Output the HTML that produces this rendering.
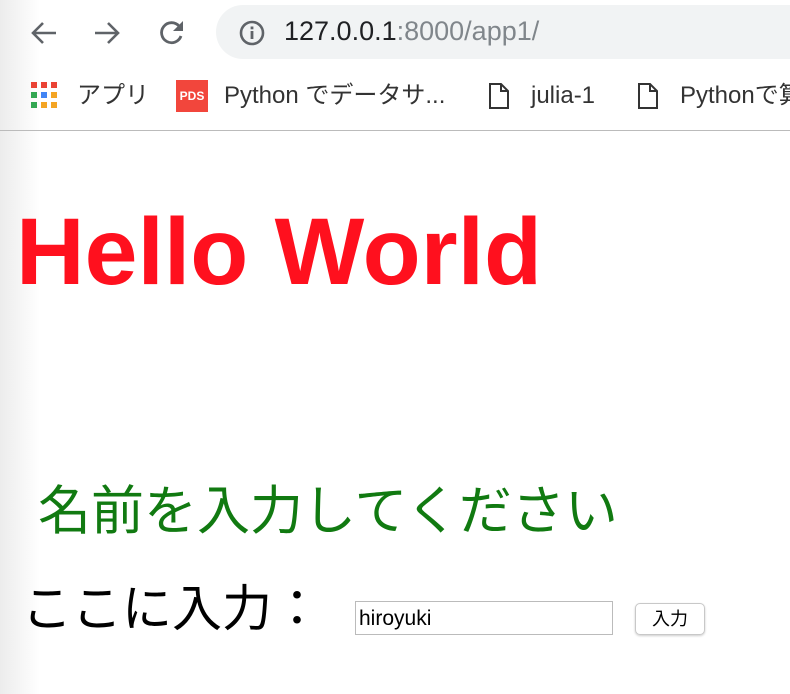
<!DOCTYPE html>
<html><head><meta charset="utf-8"><style>
body{margin:0;width:790px;height:694px;overflow:hidden;background:#fff;position:relative;font-family:"Liberation Sans","Noto Sans CJK JP",sans-serif}
.grad{position:absolute;left:0;top:0;width:40px;height:694px;background:linear-gradient(90deg,#ececec,#fff)}
.a{position:absolute}
.pill{left:216px;top:5px;width:600px;height:54px;border-radius:27px;background:#f1f3f4}
.url{left:284px;top:16px;font-size:27px;color:#202124}
.url span{color:#80868b}
.bm{top:80px;font-size:24px;line-height:32px;height:32px;color:#333;white-space:nowrap}
.dot{position:absolute;width:6px;height:6px}
</style></head><body>
<div class="grad"></div>
<svg class="a" style="left:28px;top:18px" width="36" height="30" viewBox="0 0 36 30"><path d="M28 15H5M15 5L5 15l10 10" fill="none" stroke="#5f6368" stroke-width="2.6"/></svg>
<svg class="a" style="left:90px;top:18px" width="36" height="30" viewBox="0 0 36 30"><path d="M5 15h23M18 5l10 10-10 10" fill="none" stroke="#5f6368" stroke-width="2.6"/></svg>
<svg class="a" style="left:156px;top:17px" width="32" height="32" viewBox="0 0 32 32"><path d="M25 19a10 10 0 1 1-2-10" fill="none" stroke="#5f6368" stroke-width="2.8"/><path d="M27 4v10h-10z" fill="#5f6368"/></svg>
<div class="a pill"></div>
<svg class="a" style="left:238px;top:19px" width="28" height="28" viewBox="0 0 28 28"><circle cx="14" cy="14" r="11" fill="none" stroke="#5f6368" stroke-width="2.6"/><rect x="12.6" y="12" width="2.8" height="8" fill="#5f6368"/><rect x="12.6" y="7.5" width="2.8" height="2.8" fill="#5f6368"/></svg>
<div class="a url">127.0.0.1<span>:8000/app1/</span></div>
<div class="dot" style="left:31px;top:82px;background:#ea4335"></div><div class="dot" style="left:41px;top:82px;background:#ea4335"></div><div class="dot" style="left:51px;top:82px;background:#ea4335"></div>
<div class="dot" style="left:31px;top:92px;background:#34a853"></div><div class="dot" style="left:41px;top:92px;background:#4285f4"></div><div class="dot" style="left:51px;top:92px;background:#f4a525"></div>
<div class="dot" style="left:31px;top:102px;background:#34a853"></div><div class="dot" style="left:41px;top:102px;background:#f4a525"></div><div class="dot" style="left:51px;top:102px;background:#f4a525"></div>
<div class="a bm" style="left:77px">アプリ</div>
<div class="a" style="left:176px;top:80px;width:32px;height:32px;background:#f2463c;color:#fff;font-size:12px;font-weight:bold;line-height:32px;text-align:center">PDS</div>
<div class="a bm" style="left:224px">Python でデータサ...</div>
<svg class="a" style="left:488px;top:82px" width="22" height="28" viewBox="0 0 22 28"><path d="M2 2h11l7 7v17H2z M13 2v7h7" fill="none" stroke="#333" stroke-width="2"/></svg>
<div class="a bm" style="left:531px">julia-1</div>
<svg class="a" style="left:637px;top:82px" width="22" height="28" viewBox="0 0 22 28"><path d="M2 2h11l7 7v17H2z M13 2v7h7" fill="none" stroke="#333" stroke-width="2"/></svg>
<div class="a bm" style="left:680px">Pythonで算</div>
<div class="a" style="left:0;top:130px;width:790px;height:1px;background:#bbb"></div>
<div class="a" style="left:16px;top:198px;font-size:95px;font-weight:bold;color:#ff101e;line-height:1.15">Hello World</div>
<div class="a" style="left:38px;top:478px;font-size:53px;color:#117a11;line-height:1.3;white-space:nowrap">名前を入力してください</div>
<div class="a" style="left:22px;top:577px;font-size:50px;color:#000;line-height:1.3;white-space:nowrap">ここに入力：</div>
<div class="a" style="left:355px;top:601px;width:258px;height:34px;border:1px solid #bbb;box-sizing:border-box;font-size:21px;line-height:34px;padding-left:3px">hiroyuki</div>
<div class="a" style="left:635px;top:603px;width:70px;height:32px;border:1px solid #c8c8c8;border-radius:5px;box-sizing:border-box;font-size:18px;line-height:30px;text-align:center;box-shadow:0 1px 2px rgba(0,0,0,.2)">入力</div>
</body></html>
